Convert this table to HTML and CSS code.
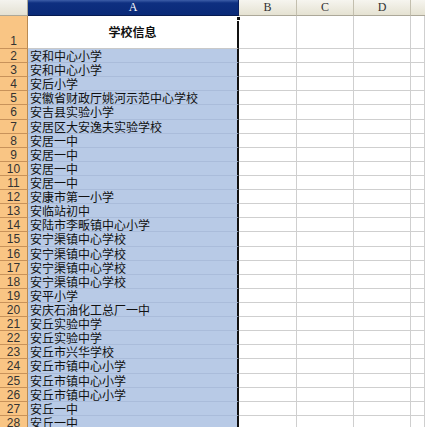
FILE: index.html
```html
<!DOCTYPE html>
<html lang="zh">
<head>
<meta charset="utf-8">
<link rel="stylesheet" href="styles.css">
</head>
<body>
<div class="sheet">
  <div class="row head">
    <div class="corner"></div>
    <div class="colhead sel">A</div>
    <div class="colhead">B</div>
    <div class="colhead">C</div>
    <div class="colhead">D</div>
    <div class="colhead last"></div>
  </div>
  <div class="row first">
    <div class="rh bottom">1</div>
    <div class="a title">学校信息</div>
    <div class="c"></div><div class="c"></div><div class="c"></div><div class="c"></div>
  </div>
  <div class="row"><div class="rh">2</div><div class="a blue">安和中心小学</div><div class="c"></div><div class="c"></div><div class="c"></div><div class="c"></div></div>
  <div class="row"><div class="rh">3</div><div class="a blue">安和中心小学</div><div class="c"></div><div class="c"></div><div class="c"></div><div class="c"></div></div>
  <div class="row"><div class="rh">4</div><div class="a blue">安后小学</div><div class="c"></div><div class="c"></div><div class="c"></div><div class="c"></div></div>
  <div class="row"><div class="rh">5</div><div class="a blue">安徽省财政厅姚河示范中心学校</div><div class="c"></div><div class="c"></div><div class="c"></div><div class="c"></div></div>
  <div class="row"><div class="rh">6</div><div class="a blue">安吉县实验小学</div><div class="c"></div><div class="c"></div><div class="c"></div><div class="c"></div></div>
  <div class="row"><div class="rh">7</div><div class="a blue">安居区大安逸夫实验学校</div><div class="c"></div><div class="c"></div><div class="c"></div><div class="c"></div></div>
  <div class="row"><div class="rh">8</div><div class="a blue">安居一中</div><div class="c"></div><div class="c"></div><div class="c"></div><div class="c"></div></div>
  <div class="row"><div class="rh">9</div><div class="a blue">安居一中</div><div class="c"></div><div class="c"></div><div class="c"></div><div class="c"></div></div>
  <div class="row"><div class="rh">10</div><div class="a blue">安居一中</div><div class="c"></div><div class="c"></div><div class="c"></div><div class="c"></div></div>
  <div class="row"><div class="rh">11</div><div class="a blue">安居一中</div><div class="c"></div><div class="c"></div><div class="c"></div><div class="c"></div></div>
  <div class="row"><div class="rh">12</div><div class="a blue">安康市第一小学</div><div class="c"></div><div class="c"></div><div class="c"></div><div class="c"></div></div>
  <div class="row"><div class="rh">13</div><div class="a blue">安临站初中</div><div class="c"></div><div class="c"></div><div class="c"></div><div class="c"></div></div>
  <div class="row"><div class="rh">14</div><div class="a blue">安陆市李畈镇中心小学</div><div class="c"></div><div class="c"></div><div class="c"></div><div class="c"></div></div>
  <div class="row"><div class="rh">15</div><div class="a blue">安宁渠镇中心学校</div><div class="c"></div><div class="c"></div><div class="c"></div><div class="c"></div></div>
  <div class="row"><div class="rh">16</div><div class="a blue">安宁渠镇中心学校</div><div class="c"></div><div class="c"></div><div class="c"></div><div class="c"></div></div>
  <div class="row"><div class="rh">17</div><div class="a blue">安宁渠镇中心学校</div><div class="c"></div><div class="c"></div><div class="c"></div><div class="c"></div></div>
  <div class="row"><div class="rh">18</div><div class="a blue">安宁渠镇中心学校</div><div class="c"></div><div class="c"></div><div class="c"></div><div class="c"></div></div>
  <div class="row"><div class="rh">19</div><div class="a blue">安平小学</div><div class="c"></div><div class="c"></div><div class="c"></div><div class="c"></div></div>
  <div class="row"><div class="rh">20</div><div class="a blue">安庆石油化工总厂一中</div><div class="c"></div><div class="c"></div><div class="c"></div><div class="c"></div></div>
  <div class="row"><div class="rh">21</div><div class="a blue">安丘实验中学</div><div class="c"></div><div class="c"></div><div class="c"></div><div class="c"></div></div>
  <div class="row"><div class="rh">22</div><div class="a blue">安丘实验中学</div><div class="c"></div><div class="c"></div><div class="c"></div><div class="c"></div></div>
  <div class="row"><div class="rh">23</div><div class="a blue">安丘市兴华学校</div><div class="c"></div><div class="c"></div><div class="c"></div><div class="c"></div></div>
  <div class="row"><div class="rh">24</div><div class="a blue">安丘市镇中心小学</div><div class="c"></div><div class="c"></div><div class="c"></div><div class="c"></div></div>
  <div class="row"><div class="rh">25</div><div class="a blue">安丘市镇中心小学</div><div class="c"></div><div class="c"></div><div class="c"></div><div class="c"></div></div>
  <div class="row"><div class="rh">26</div><div class="a blue">安丘市镇中心小学</div><div class="c"></div><div class="c"></div><div class="c"></div><div class="c"></div></div>
  <div class="row"><div class="rh">27</div><div class="a blue">安丘一中</div><div class="c"></div><div class="c"></div><div class="c"></div><div class="c"></div></div>
  <div class="row"><div class="rh">28</div><div class="a blue">安丘一中</div><div class="c"></div><div class="c"></div><div class="c"></div><div class="c"></div></div>
  <div class="handle"></div>
</div>
</body>
</html>
```
FILE: styles.css
```css
html, body {
  margin: 0;
  padding: 0;
  background: #fff;
}
.sheet {
  position: relative;
  width: 425px;
  height: 427px;
  overflow: hidden;
  font-family: "Noto Sans CJK SC", sans-serif;
  font-size: 12px;
  color: #111;
}
.row {
  display: grid;
  grid-template-columns: 28px 211px 58px 57px 57px 1fr;
  height: 14.12px;
}
.row > div {
  box-sizing: border-box;
  overflow: hidden;
  white-space: nowrap;
}
.row.head {
  height: 16px;
}
.row.first {
  height: 33px;
}
.corner {
  background: linear-gradient(#f4f3ee, #e4e1d3);
  border-right: 1px solid #aca899;
  border-bottom: 1px solid #aca899;
}
.colhead {
  background: linear-gradient(#f6f5ef, #e5e2d2);
  border-right: 1px solid #c3bfae;
  border-bottom: 1px solid #aca899;
  font-family: "Liberation Serif", serif;
  font-size: 12px;
  color: #333;
  text-align: center;
  line-height: 15px;
}
.colhead.sel {
  background: linear-gradient(#3d5ea8 0, #0e2f80 3px, #0a2a78 100%);
  color: #fff;
  border-right: 1px solid #0a2060;
  border-bottom: 1px solid #061a50;
}
.colhead.last {
  border-right: none;
}
.rh {
  background: #f9c584;
  border-right: 1px solid #b98a52;
  border-bottom: 1px solid #c8925a;
  font-family: "Liberation Sans", sans-serif;
  font-size: 12px;
  color: #333;
  text-align: center;
  line-height: 14px;
}
.rh.bottom {
  display: flex;
  align-items: flex-end;
  justify-content: center;
}
.a {
  border-right: 2px solid #111;
  border-bottom: 1px solid #c9c9c9;
  padding-left: 2px;
  line-height: 13px;
  font-size: 12px;
}
.a.blue {
  background: #b8cae6;
  border-bottom: 1px solid #aabcda;
}
.a.title {
  background: #fff;
  font-weight: bold;
  text-align: center;
  line-height: 32px;
  padding-left: 0;
}
.c {
  border-right: 1px solid #cfcfcf;
  border-bottom: 1px solid #cfcfcf;
}
.handle {
  position: absolute;
  left: 236px;
  top: 16px;
  width: 5px;
  height: 5px;
  background: #111;
  border: 1px solid #fff;
  box-sizing: border-box;
}
```
